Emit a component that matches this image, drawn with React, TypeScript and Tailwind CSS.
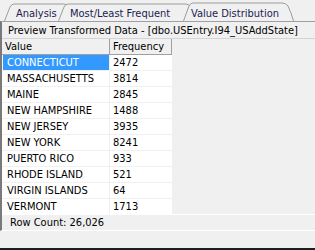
const rows = [
  { value: 'CONNECTICUT', freq: 2472 },
  { value: 'MASSACHUSETTS', freq: 3814 },
  { value: 'MAINE', freq: 2845 },
  { value: 'NEW HAMPSHIRE', freq: 1488 },
  { value: 'NEW JERSEY', freq: 3935 },
  { value: 'NEW YORK', freq: 8241 },
  { value: 'PUERTO RICO', freq: 933 },
  { value: 'RHODE ISLAND', freq: 521 },
  { value: 'VIRGIN ISLANDS', freq: 64 },
  { value: 'VERMONT', freq: 1713 },
];

const App = () => {
  const selected = 0;

  return (
    <div className="w-[315px] h-[250px] bg-[#f0f0f0] overflow-hidden text-[11px] leading-[13px] text-black font-['DejaVu_Sans_Condensed','DejaVu_Sans',sans-serif] [font-stretch:condensed]">
      {/* Tabs */}
      <div className="relative h-[21px]">
        <svg className="absolute inset-0" width="315" height="21" viewBox="0 0 315 21">
          <path d="M4.5 21 L10 7 Q11.5 4 14 4 L64 4 Q67 4 68.5 7 L74 21" fill="#f0f0f0" stroke="#9c9c9c" />
          <path d="M58.5 21 L64 7 Q65.5 4 68 4 L186 4 Q189 4 190.5 7 L196 21" fill="#f0f0f0" stroke="#9c9c9c" />
          <path d="M183.5 21 L189 6 Q190.5 3 193 3 L282 3 Q286 3 288 6 Q291 12 293.5 21" fill="#f0f0f0" stroke="#9c9c9c" />
        </svg>
        <div className="relative flex pt-[7px] text-[#1c1c52]">
          <span className="w-[70px] pl-[16px]">Analysis</span>
          <span className="w-[121px]">Most/Least Frequent</span>
          <span>Value Distribution</span>
        </div>
      </div>

      {/* Frame */}
      <div className="h-[210px] flex flex-col border-t border-t-[#a0a0a0] border-l-2 border-l-[#7a7a7a] border-b border-b-white">
        <div className="h-[16px] pl-[6px] flex items-center">
          Preview Transformed Data - [dbo.USEntry.I94_USAddState]
        </div>

        <div className="flex-1 flex flex-col border-t border-t-[#d4d4d4]">
          <div className="w-[170px] flex-1 bg-white">
            {/* Header */}
            <div className="flex h-[16px] bg-[#f0f0f0] border-b border-b-[#a0a0a0]">
              <div className="w-[108px] pl-[3px] flex items-center border-r border-r-[#a0a0a0]">Value</div>
              <div className="w-[62px] pl-[3px] flex items-center border-r border-r-[#a0a0a0]">Frequency</div>
            </div>
            {/* Rows */}
            {rows.map((row, index) => (
              <div
                key={row.value}
                className={
                  index === rows.length - 1
                    ? 'flex h-[15px]'
                    : 'flex h-[16px] border-b border-b-[#f0f0f0]'
                }
              >
                <div className="w-[108px] pl-[1px] border-r border-r-[#f0f0f0] flex">
                  <div
                    className={
                      index === selected
                        ? 'flex-1 pl-[4px] flex items-center bg-[#3399ff] text-white'
                        : 'flex-1 pl-[4px] flex items-center'
                    }
                  >
                    {row.value}
                  </div>
                </div>
                <div className="w-[62px] pl-[3px] flex items-center">{row.freq}</div>
              </div>
            ))}
          </div>

          {/* Row count */}
          <div className="h-[16px] pl-[8px] flex items-center border-t border-t-white">
            Row Count: 26,026
          </div>
        </div>
      </div>

      <div className="h-[17px]" />
      <div className="h-[2px] bg-[#1e1e1e]" />
    </div>
  );
};

export default App;
